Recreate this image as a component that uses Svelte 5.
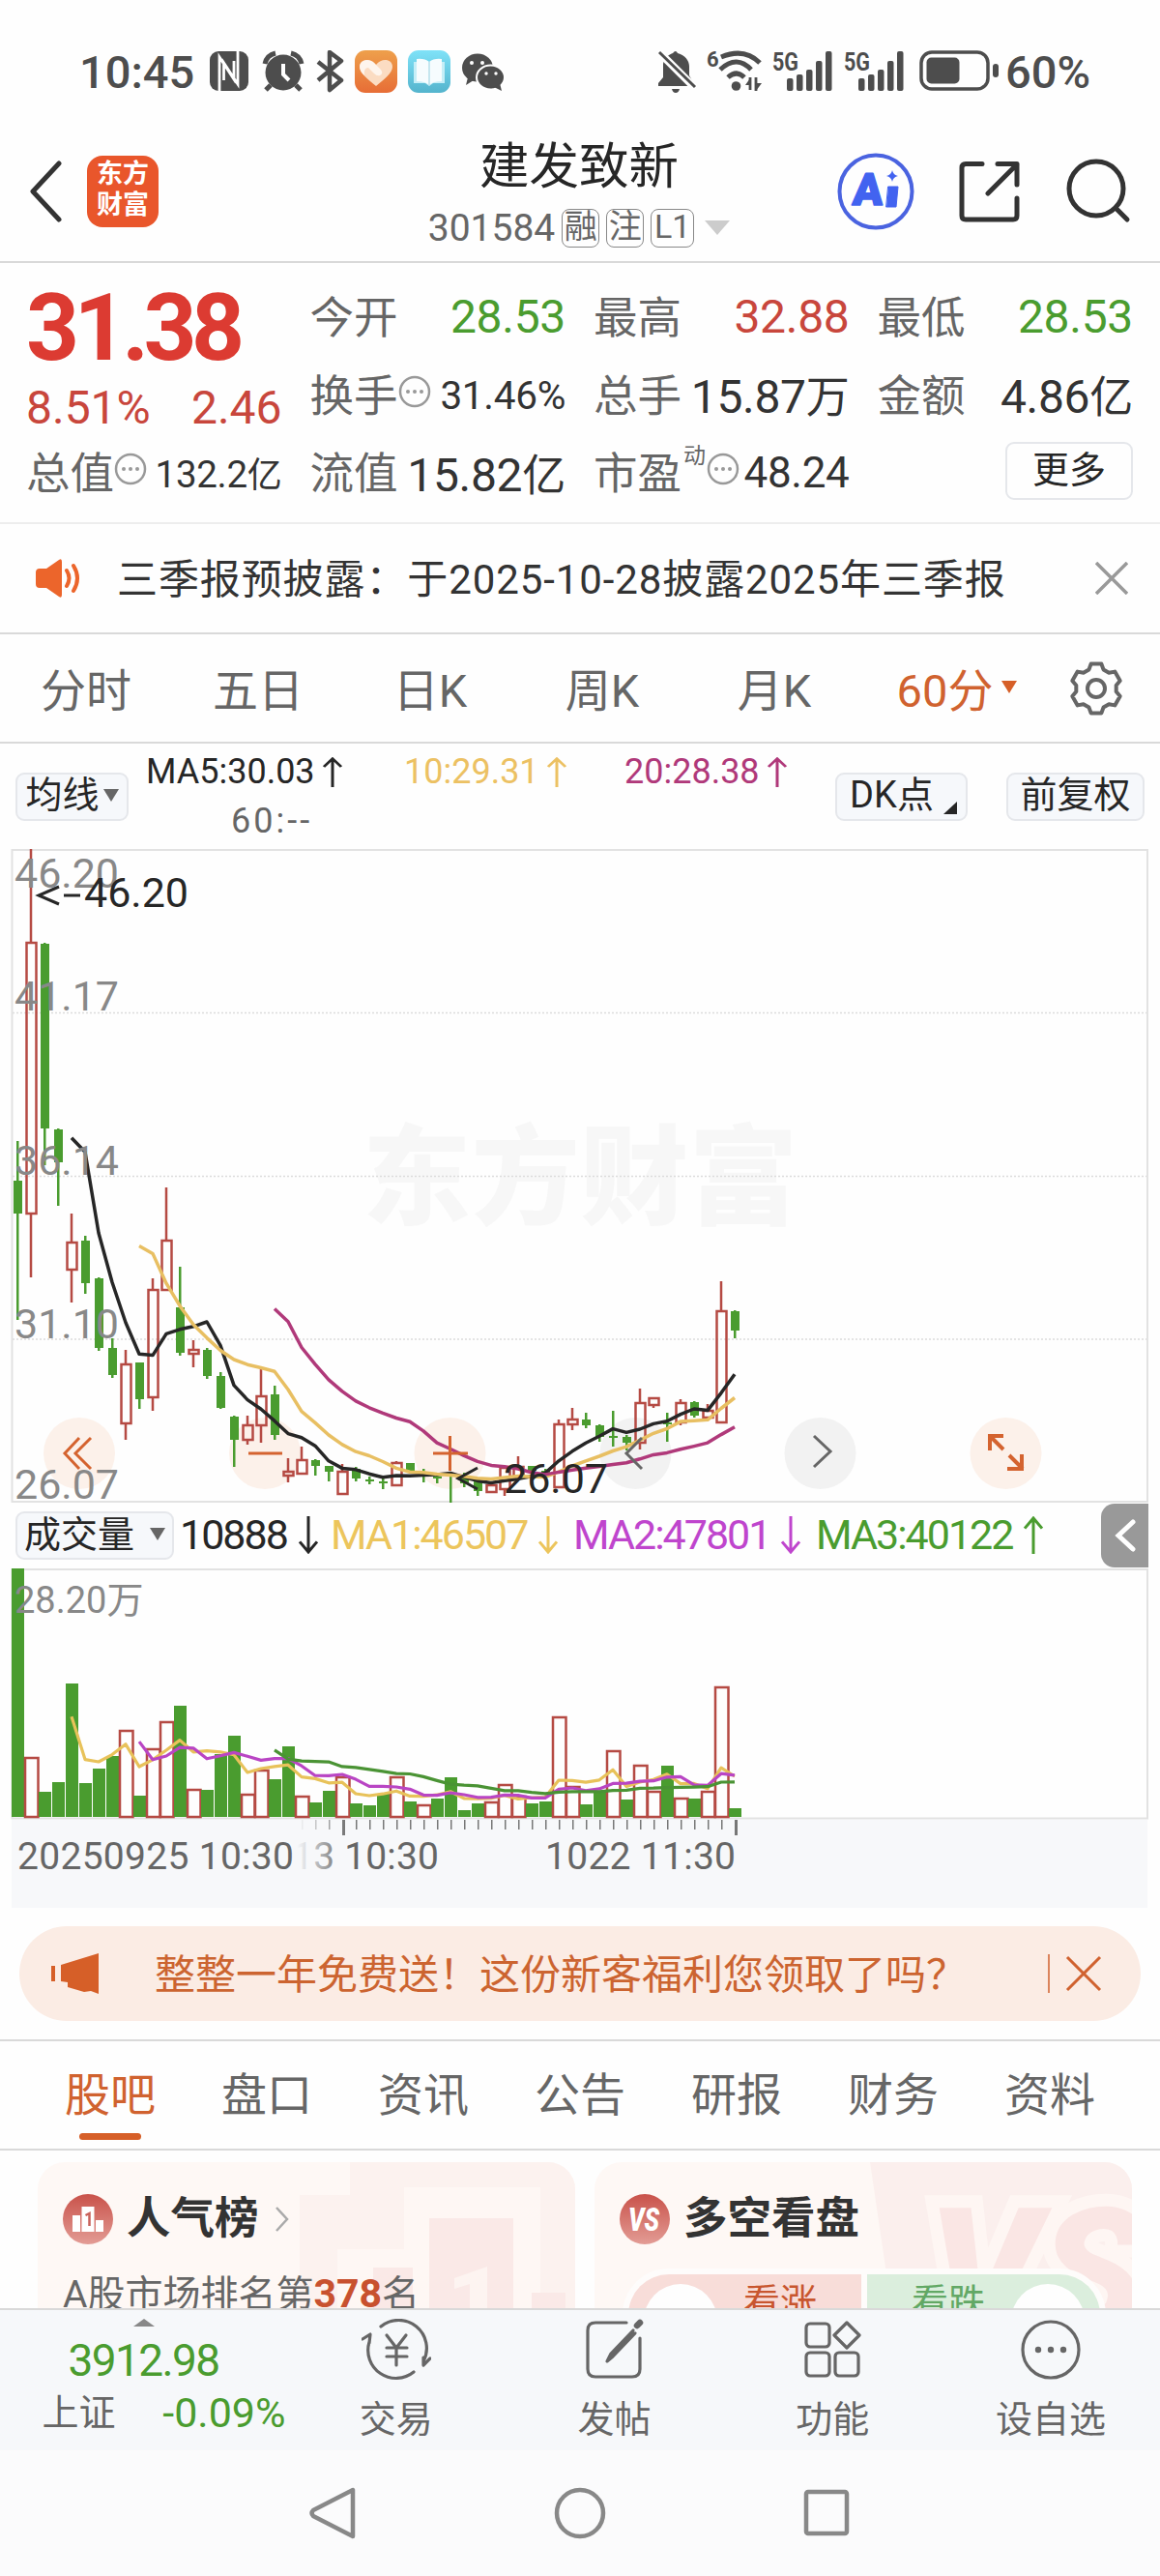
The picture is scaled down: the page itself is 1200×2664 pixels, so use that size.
<script lang="ts">
  type Candle = [up: number, high: number, top: number, bottom: number, low: number];

  const quotes = [
    { label: "今开", value: "28.53", unit: "", tone: "down" },
    { label: "最高", value: "32.88", unit: "", tone: "rise" },
    { label: "最低", value: "28.53", unit: "", tone: "down" },
    { label: "换手", value: "31.46%", unit: "", info: true, small: true },
    { label: "总手", value: "15.87", unit: "万" },
    { label: "金额", value: "4.86", unit: "亿" },
    { label: "总值", value: "132.2", unit: "亿", info: true, tiny: true },
    { label: "流值", value: "15.82", unit: "亿" },
    { label: "市盈", value: "48.24", unit: "", sup: "动", info: true, mid: true },
  ];

  const periods = ["分时", "五日", "日K", "周K", "月K"];
  const sections = ["股吧", "盘口", "资讯", "公告", "研报", "财务", "资料"];

  const priceLabels = [
    { text: "46.20", y: 40 },
    { text: "41.17", y: 167 },
    { text: "36.14", y: 337 },
    { text: "31.10", y: 506 },
    { text: "26.07", y: 672 },
  ];

  // up flag, high, body top, body bottom, low: measured from the top of the chart
  const candles: Candle[] = [
    [0, 302, 343, 377, 487], [1, 0, 97, 377, 443], [0, 97, 98, 289, 327], [0, 289, 290, 324, 369],
    [1, 377, 407, 435, 469], [0, 400, 405, 449, 460], [0, 443, 444, 516, 519], [0, 506, 516, 544, 547],
    [1, 518, 533, 594, 611], [0, 531, 531, 569, 579], [1, 444, 456, 567, 581], [1, 350, 405, 456, 456],
    [0, 432, 474, 521, 524], [1, 508, 518, 522, 536], [0, 516, 518, 545, 548], [0, 541, 545, 578, 579],
    [0, 586, 587, 611, 639], [1, 586, 596, 611, 616], [1, 538, 566, 596, 614], [0, 555, 564, 606, 611],
    [1, 630, 644, 648, 655], [1, 618, 632, 646, 646], [0, 631, 632, 638, 648], [0, 638, 638, 644, 654],
    [1, 636, 644, 667, 667], [0, 639, 641, 651, 654], [0, 649, 652, 654, 657], [0, 650, 654, 656, 662],
    [1, 633, 635, 658, 659], [0, 635, 635, 645, 645], [0, 641, 646, 648, 655], [0, 645, 649, 651, 656],
    [0, 645, 646, 648, 676], [0, 645, 650, 656, 660], [0, 652, 654, 664, 669], [1, 658, 658, 665, 666],
    [1, 639, 640, 662, 669], [1, 628, 639, 650, 652], [0, 638, 638, 643, 643], [0, 641, 643, 647, 652],
    [1, 590, 595, 660, 661], [1, 578, 590, 595, 601], [0, 583, 590, 596, 599], [0, 595, 596, 608, 613],
    [0, 581, 607, 609, 618], [0, 606, 608, 614, 622], [1, 558, 573, 614, 621], [1, 567, 568, 575, 578],
    [0, 583, 593, 595, 613], [1, 569, 573, 593, 596], [0, 571, 572, 586, 588], [1, 574, 581, 588, 588],
    [1, 447, 478, 593, 593], [0, 477, 478, 498, 506],
  ];

  const volumes = [
    257, 62, 26, 36, 138, 35, 50, 63, 90, 22, 71, 99, 115, 29, 28, 65, 84, 24,
    49, 39, 73, 22, 15, 27, 42, 14, 12, 24, 42, 16, 13, 19, 41, 7, 14, 16,
    34, 22, 14, 16, 104, 32, 13, 26, 69, 18, 54, 27, 53, 20, 19, 27, 135, 9,
  ];

  const risingVolumes = new Set([
    1, 8, 10, 11, 13, 17, 18, 21, 24, 28, 30, 35, 36, 37, 40, 41, 44, 46, 47, 49, 51, 52,
  ]);

  const STEP = 14;
  const X0 = 18;
  const VOL_BASE = 257;

  const xAt = (i: number) => X0 + i * STEP;
  const closes = candles.map(([up, , top, bottom]) => (up ? top : bottom));

  function movingAverage(values: number[], n: number, toY = (v: number) => v) {
    const points: string[] = [];
    for (let i = n - 1; i < values.length; i++) {
      const sum = values.slice(i - n + 1, i + 1).reduce((a, b) => a + b, 0);
      points.push(`${xAt(i)},${toY(sum / n).toFixed(1)}`);
    }
    return points.join(" ");
  }

  const volY = (v: number) => VOL_BASE - v;
  const ticks = Array.from({ length: 33 }, (_, k) => 21 + k);

  function gearPath(c: number) {
    const pts: string[] = [];
    for (let k = 0; k < 6; k++) {
      for (const [r, deg] of [[21, -21], [26, -12], [26, 12], [21, 21]]) {
        const a = ((k * 60 - 90 + deg) * Math.PI) / 180;
        pts.push(`${(c + r * Math.cos(a)).toFixed(1)} ${(c + r * Math.sin(a)).toFixed(1)}`);
      }
    }
    return `M${pts.join("L")}Z`;
  }
</script>

{#snippet arrow(up: boolean, h: number)}
  <svg class="arrow" width="22" height={h} viewBox="0 0 22 40" preserveAspectRatio="none">
    <path d={up ? "M11 40V3M2 13 11 2l9 11" : "M11 0v37M2 27l9 11 9-11"} />
  </svg>
{/snippet}

{#snippet signal()}
  <svg width="66" height="44" viewBox="0 0 66 44">
    <text x="1" y="21" font-size="26" font-weight="700" textLength="27" lengthAdjust="spacingAndGlyphs">5G</text>
    <rect x="16" y="29" width="6.5" height="13" rx="2" />
    <rect x="26" y="25" width="6.5" height="17" rx="2" />
    <rect x="36" y="20" width="6.5" height="22" rx="2" />
    <rect x="46" y="11" width="6.5" height="31" rx="2" />
    <rect x="56" y="1" width="6.5" height="41" rx="2" />
  </svg>
{/snippet}

<div class="screen" lang="zh-CN">
  <div class="status">
    <span>10:45</span>
    <svg width="44" height="44" viewBox="0 0 44 44">
      <rect x="2" y="1" width="40" height="41" rx="9" />
      <path d="M12 43V7l15 23V11M31 0v35L16.500 13v18" fill="none" stroke="#fff" stroke-width="2.800" />
    </svg>
    <svg width="44" height="44" viewBox="0 0 44 44">
      <circle cx="22" cy="23" r="18.500" />
      <path d="M3 14Q5 5 14 3M41 14Q39 5 30 3" fill="none" stroke="#4d4d4d" stroke-width="5" />
      <path d="M9 36l-5 5M35 36l5 5" stroke="#4d4d4d" stroke-width="5" />
      <path d="M22 14v11l6 6" fill="none" stroke="#fff" stroke-width="4" />
    </svg>
    <svg width="32" height="44" viewBox="0 0 32 44">
      <path d="M2 12 26 31 14 41V2l12 9L2 31" fill="none" stroke="#4d4d4d" stroke-width="4.500" stroke-linejoin="round" />
    </svg>
    <svg width="44" height="44" viewBox="0 0 44 44">
      <defs>
        <linearGradient id="heartBg" x2="0" y2="1"><stop stop-color="#eea04c" /><stop offset="1" stop-color="#e76d36" /></linearGradient>
        <linearGradient id="bookBg" x2="0" y2="1"><stop stop-color="#7fe2f8" /><stop offset="1" stop-color="#54b4cd" /></linearGradient>
      </defs>
      <rect width="44" height="44" rx="11" fill="url(#heartBg)" />
      <path d="M22 37C14 30 5 24 5 17c0-8 11-10 17-2 6-8 17-6 17 2 0 7-9 13-17 20z" fill="#fbdcc2" />
      <path d="M5 17c0-6 9-10 15-4l7 7q3 4-1 6-3 1-6-2l-6-6q-5 0-4 8-5-4-5-9z" fill="#fff" opacity=".7" />
    </svg>
    <svg width="44" height="44" viewBox="0 0 44 44">
      <rect width="44" height="44" rx="11" fill="url(#bookBg)" />
      <path d="M6 12h32v22H26l-4 3-4-3H6z" fill="#c5eef7" />
      <path d="M9 9q8-1 13 3 5-4 13-3v23q-9 0-13 4-4-4-13-4z" fill="#f6fcfe" />
      <path d="M22 12v24" stroke="#b5dfea" stroke-width="1.500" />
    </svg>
    <svg width="46" height="44" viewBox="0 0 46 44">
      <ellipse cx="17" cy="18" rx="16" ry="14.500" />
      <path d="M7 28l-2 8 8-5z" />
      <ellipse cx="30.500" cy="28" rx="14.500" ry="12.500" stroke="#fff" stroke-width="2" />
      <path d="M34 38l8 4-2-8z" />
      <g fill="#fff"><circle cx="11" cy="13" r="2" /><circle cx="22" cy="13" r="2" /><circle cx="26" cy="24" r="1.700" /><circle cx="36" cy="24" r="1.700" /></g>
    </svg>
    <svg width="42" height="44" viewBox="0 0 42 44">
      <path d="M0 37v-3l5-6V14C6 8 10 5 15 3q3-4 5 0c8 2 12 8 12 14v9L38 37zM14 40h8q-1 4-4 4t-4-4z" />
      <path d="M0 1 38 39" stroke="#fff" stroke-width="8" />
      <path d="M1 2 38 38" stroke="#4d4d4d" stroke-width="3" />
    </svg>
    <svg width="60" height="44" viewBox="0 0 60 44">
      <text x="0" y="17" font-size="22" font-weight="700">6</text>
      <g fill="none" stroke="#4d4d4d" stroke-width="5">
        <path d="M15 7Q39-3 55 13M14 20Q31 4 46 20M22 28Q31 20 39 28" />
        <path d="M45 41V28M51 28v14" stroke-width="2.800" />
      </g>
      <circle cx="30.500" cy="37" r="4.800" />
      <path d="M40 36l5-7v7zM51 42l6-8h-6z" />
    </svg>
    {@render signal()}
    {@render signal()}
    <svg width="84" height="44" viewBox="0 0 84 44">
      <rect x="2" y="2" width="69" height="38" rx="11" fill="none" stroke="#4d4d4d" stroke-width="3.500" />
      <rect x="7.500" y="7.500" width="34" height="27" rx="5" />
      <rect x="76" y="14" width="6" height="14" rx="3" />
    </svg>
    <span>60%</span>
  </div>

  <header>
    <svg class="back" width="40" height="64" viewBox="0 0 40 64"><path d="M34 3 7 32l27 29" /></svg>
    <div class="logo">东方<br />财富</div>
    <div class="title">
      <h1>建发致新</h1>
      <div class="code">
        301584
        <span class="badge">融</span><span class="badge">注</span><span class="badge l1">L1</span>
        <i class="caret"></i>
      </div>
    </div>
    <svg class="ai" width="80" height="80" viewBox="0 0 80 80">
      <circle cx="40" cy="40" r="37.500" fill="none" stroke="#4a63e0" stroke-width="4" />
      <text x="15" y="54" font-size="46" font-weight="900" stroke="#4263f0" stroke-width="1.500" transform="skewX(-4) translate(4 0)">A</text>
      <path d="M53 35h10l-2 21h-10z" stroke="#4263f0" stroke-width="1" stroke-linejoin="round" />
      <path d="M57 18q1 5 6 6-5 1-6 6-1-5-6-6 5-1 6-6z" />
    </svg>
    <svg class="share" width="64" height="64" viewBox="0 0 64 64">
      <path d="M24 3.500H7q-4 0-4 4V57q0 4 4 4h49q4 0 4-4V39M40 3.500h20V25M60 4 30 34" />
    </svg>
    <svg class="search" width="70" height="70" viewBox="0 0 70 70">
      <circle cx="33" cy="32" r="28" /><path d="m53 52 12 12" />
    </svg>
  </header>

  <section class="quote">
    <div class="price">
      <strong>31.38</strong>
      <div><span>8.51%</span><span>2.46</span></div>
    </div>
    {#each quotes as q}
      <div class="cell">
        <span class="label">{q.label}</span>
        {#if q.sup}<sup>{q.sup}</sup>{/if}
        {#if q.info}
          <svg class="info" class:tight={q.sup} width="34" height="34" viewBox="0 0 34 34">
            <circle cx="17" cy="17" r="15" fill="none" stroke="#999" stroke-width="2.500" />
            <circle cx="10" cy="17" r="2" /><circle cx="17" cy="17" r="2" /><circle cx="24" cy="17" r="2" />
          </svg>
        {/if}
        <span class="value {q.tone ?? ''}" class:small={q.small} class:tiny={q.tiny} class:mid={q.mid}>{q.value}<em>{q.unit}</em></span>
      </div>
    {/each}
    <button class="more">更多</button>
  </section>

  <section class="notice">
    <svg width="50" height="42" viewBox="0 0 50 42">
      <path d="M1 15q0-4 4-4h7L25 2q3-2 3 2v34q0 4-3 2L12 31H5q-4 0-4-4z" fill="#ec652b" />
      <path d="M33 13q5 8 0 16M40 8q8 13 0 26" fill="none" stroke="#ec652b" stroke-width="4" stroke-linecap="round" />
    </svg>
    <p>三季报预披露：于2025-10-28披露2025年三季报</p>
    <svg width="34" height="34" viewBox="0 0 34 34"><path d="M1 1l32 32M33 1 1 33" stroke="#999" stroke-width="3.500" /></svg>
  </section>

  <nav class="periods">
    {#each periods as p}<span>{p}</span>{/each}
    <span class="active">60分<i></i></span>
    <svg width="56" height="56" viewBox="0 0 56 56" fill="none" stroke="#666" stroke-width="4" stroke-linejoin="round">
      <path d={gearPath(28)} /><circle cx="28" cy="28" r="9" />
    </svg>
  </nav>

  <div class="tools">
    <button class="ma">均线<i></i></button>
    <div class="legend">
      <span>MA5:30.03{@render arrow(true, 31)}</span>
      <span class="ma10">10:29.31{@render arrow(true, 31)}</span>
      <span class="ma20">20:28.38{@render arrow(true, 31)}</span>
      <span class="ma60">60:--</span>
    </div>
    <button class="dk">DK点<i></i></button>
    <button class="fq">前复权</button>
  </div>

  <svg class="chart" width="1200" height="676" viewBox="0 0 1200 676">
    <text class="watermark" x="375" y="380" textLength="450">东方财富</text>
    <g stroke="#dcdcdc" stroke-width="1.500" stroke-dasharray="2 2">
      <path d="M13 169.500H1187M13 338.500H1187M13 507H1187" />
    </g>
    <rect x="12.500" y="1" width="1174.500" height="674" fill="none" stroke="#e2e2e2" stroke-width="2" />
    {#each [82, 274, 465.5, 657.5, 848.5, 1040.5] as cx, i}
      <circle {cx} cy="625" r="37" fill={i === 3 || i === 4 ? "#f2f2f2" : "#fcf1ea"} />
    {/each}
    {#each candles as [up, high, top, bottom, low], i}
      {#if up}
        <g stroke="#b54a43" stroke-width="2.500" fill="none">
          <path d="M{xAt(i)} {high}V{top}M{xAt(i)} {bottom}V{low}" />
          <rect x={xAt(i) - 4.5} y={top} width="10" height={bottom - top} />
        </g>
      {:else}
        <g fill="#4a9c2f">
          <rect x={xAt(i) - 1} y={high} width="2.5" height={low - high} />
          <rect x={xAt(i) - 4} y={top} width="9" height={bottom - top} />
        </g>
      {/if}
    {/each}
    <g fill="none" stroke-width="3.500" stroke-linejoin="round">
      <polyline points={movingAverage(closes, 5)} stroke="#262626" />
      <polyline points={movingAverage(closes, 10)} stroke="#e8bf62" />
      <polyline points={movingAverage(closes, 20)} stroke="#b0397a" />
    </g>
    <g class="axis">
      {#each priceLabels as l}<text x="15" y={l.y}>{l.text}</text>{/each}
    </g>
    <g class="mark">
      <path d="M61 39 40 48l21 9M66 48h17M494 640l-20 11 20 11" />
      <text x="87" y="60">46.20</text>
      <text x="521" y="666">26.07</text>
    </g>
    <g fill="none" stroke="#d4632f" stroke-width="3">
      <path d="M82 609 67 625l15 16M94 609 78 625l16 16M257 625h35M448 625h36M465.500 607v36" />
      <path d="M1038 607h-14v15M1024 607l14 14M1044 627l14 14M1042 641h15v-15" stroke-width="4" />
      <path d="M664 609 648 625l16 16M842 607l17 16-17 16" stroke="#666" />
    </g>
  </svg>

  <div class="volHead">
    <button>成交量<i></i></button>
    <span>10888{@render arrow(false, 39)}</span>
    <span class="v1">MA1:46507{@render arrow(false, 39)}</span>
    <span class="v2">MA2:47801{@render arrow(false, 39)}</span>
    <span class="v3">MA3:40122{@render arrow(true, 39)}</span>
    <div class="fold">
      <svg width="22" height="34" viewBox="0 0 22 34"><path d="M19 3 4 17l15 14" /></svg>
    </div>
  </div>

  <svg class="chart" width="1200" height="351" viewBox="0 0 1200 351">
    <defs>
      <linearGradient id="fade"><stop offset=".1" stop-color="#f7f8fa" /><stop offset="1" stop-color="#f7f8fa" stop-opacity="0" /></linearGradient>
    </defs>
    <rect x="12.500" y="1" width="1174.500" height="257.500" fill="none" stroke="#e2e2e2" stroke-width="2" />
    <rect x="12" y="260" width="1175" height="91" fill="#f7f8fa" />
    {#each volumes as v, i}
      {#if risingVolumes.has(i)}
        <rect x={xAt(i) - 6} y={volY(v) + 1} width="13.5" height={v - 1} fill="#fefefe" stroke="#b54a43" stroke-width="2.500" />
      {:else}
        <rect x={xAt(i) - 6} y={volY(v)} width="13" height={v} fill="#4a9c2f" />
      {/if}
    {/each}
    <g fill="none" stroke-width="3.200" stroke-linejoin="round">
      <polyline points={movingAverage(volumes, 5, volY)} stroke="#e8c25a" />
      <polyline points={movingAverage(volumes, 10, volY)} stroke="#b945c4" />
      <polyline points={movingAverage(volumes, 20, volY)} stroke="#4a9334" />
    </g>
    <text x="15" y="46" class="peak">28.20万</text>
    {#each ticks as t}
      {@const major = t === 24 || t === 53}
      <rect x={xAt(t)} y="260" width={major ? 3 : 1.5} height={major ? 16 : 10} fill="#777" />
    {/each}
    <g class="dates">
      <text x="258" y="311" textLength="196">1013 10:30</text>
      <rect x="12" y="260" width="290" height="91" fill="#f7f8fa" />
      <rect x="302" y="260" width="55" height="91" fill="url(#fade)" />
      <text x="18" y="311" textLength="286">20250925 10:30</text>
      <text x="564" y="311" textLength="197">1022 11:30</text>
    </g>
  </svg>

  <div class="promo">
    <svg width="50" height="44" viewBox="0 0 50 44">
      <path d="M0 14h4v16H0zM10 13 49 1v42l-8-3-7 1-17-5v-5l-7-1z" fill="#d65f28" />
    </svg>
    <p>整整一年免费送！这份新客福利您领取了吗？</p>
    <svg class="close" width="56" height="40" viewBox="0 0 56 40">
      <path d="M1 0v40" stroke-width="1.500" /><path d="m20 3 34 34M54 3 20 37" stroke-width="3" />
    </svg>
  </div>

  <nav class="sections">
    {#each sections as s, i}<span class:active={i === 0}>{s}</span>{/each}
  </nav>

  <section class="cards">
    <article>
      <svg class="deco" width="556" height="170" viewBox="0 0 556 170">
        <path d="M271 34h52V0h233v170H271z" fill="#fbefed" opacity=".7" />
        <path d="M310 90h69V26h141v144H310z" fill="#fef7f4" />
        <path d="M405 58h87v112h-87zM347 109h41v61h-41zM511 135h35v35h-35z" fill="#fae9e7" />
        <path d="m431 120 34-12v62h-18v-44l-16 5z" fill="#fdf4f1" />
      </svg>
      <div class="head">
        <svg width="52" height="52" viewBox="0 0 52 52">
          <defs><linearGradient id="badge" x2="0" y2="1"><stop stop-color="#c9524a" /><stop offset="1" stop-color="#e39c95" /></linearGradient></defs>
          <circle cx="26" cy="26" r="26" fill="url(#badge)" />
          <path d="M10 22h8v17h-8zM19.500 13h13v26h-13zM34 27h8v12h-8z" fill="#fff" />
          <path d="m23.500 22 4-2v13" fill="none" stroke="#c9625b" stroke-width="2.500" />
        </svg>
        <h2>人气榜</h2>
        <svg width="16" height="28" viewBox="0 0 16 28"><path d="m2 2 11 12L2 26" fill="none" stroke="#aaa" stroke-width="2.500" /></svg>
      </div>
      <p>A股市场排名第<b>378</b>名</p>
    </article>
    <article>
      <svg class="deco" width="556" height="170" viewBox="0 0 556 170">
        <path d="M285 0h271v170H310z" fill="#fbefed" />
        <text x="345" y="175" font-size="180" font-weight="900" font-style="italic" textLength="225" lengthAdjust="spacingAndGlyphs">VS</text>
      </svg>
      <div class="head">
        <svg width="52" height="52" viewBox="0 0 52 52">
          <circle cx="26" cy="26" r="26" fill="url(#badge)" />
          <text x="9" y="38" font-size="34" font-weight="900" font-style="italic" fill="#fff" textLength="32" lengthAdjust="spacingAndGlyphs">VS</text>
        </svg>
        <h2>多空看盘</h2>
      </div>
      <div class="vote">
        <div class="bull"><i></i>看涨</div>
        <div class="bear">看跌<i></i></div>
      </div>
    </article>
  </section>

  <footer>
    <div class="index">
      <i></i>
      <b>3912.98</b>
      <div><span>上证</span><em>-0.09%</em></div>
    </div>
    <div class="item">
      <svg width="72" height="64" viewBox="0 0 72 64">
        <path d="M20 8a29 29 0 0 1 44 36M54 55A29 29 0 0 1 8 24M1 21l8-5-1 9M71 41l-7 7v-8" />
        <path d="m26 17 10 13 10-13M26 30h21M26 39h21M36 30v18" />
      </svg>
      交易
    </div>
    <div class="item">
      <svg width="64" height="64" viewBox="0 0 64 64">
        <path d="M44 4H12q-8 0-8 8v40q0 8 8 8h38q8 0 8-8V20" />
        <path d="m55 7 3-3" stroke-width="6.500" /><path d="M51 12 28 36l-4 8 6-5 23-24" fill="#666" />
      </svg>
      发帖
    </div>
    <div class="item">
      <svg width="60" height="64" viewBox="0 0 60 64">
        <rect x="3" y="5" width="24" height="24" rx="4" /><rect x="3" y="35" width="24" height="24" rx="4" />
        <rect x="33" y="35" width="24" height="24" rx="4" /><path d="m45 4 13 13-13 13-13-13z" />
      </svg>
      功能
    </div>
    <div class="item">
      <svg width="64" height="64" viewBox="0 0 64 64">
        <circle cx="32" cy="32" r="29" />
        <g fill="#666" stroke="none"><circle cx="19" cy="32" r="3.200" /><circle cx="32" cy="32" r="3.200" /><circle cx="45" cy="32" r="3.200" /></g>
      </svg>
      设自选
    </div>
  </footer>

  <div class="sysnav">
    <svg width="50" height="56" viewBox="0 0 50 56"><path d="M45 4v48L4 31q-3-3 0-6z" /></svg>
    <svg width="56" height="56" viewBox="0 0 56 56"><circle cx="28" cy="28" r="24" /></svg>
    <svg width="50" height="56" viewBox="0 0 50 56"><rect x="4" y="6" width="42" height="43" rx="2" /></svg>
  </div>
</div>

<style>
  :global(body) {
    background: #fefefe;
  }

  .screen {
    width: 1200px;
    height: 2664px;
    overflow: hidden;
    font-family: Roboto, "Noto Sans CJK SC", sans-serif;
    color: #333;
    background: #fefefe;
  }

  .screen * {
    box-sizing: border-box;
  }

  svg {
    display: block;
    flex: none;
  }

  h1,
  h2,
  p {
    margin: 0;
  }

  i,
  em {
    font-style: normal;
  }

  button {
    display: flex;
    align-items: center;
    justify-content: center;
    padding: 0 0 3px;
    font: inherit;
    font-size: 38px;
    line-height: 1;
    color: #262626;
    background: #f6f8fb;
    border: 2px solid #e5e7eb;
    border-radius: 9px;
  }

  .status {
    display: grid;
    grid-template-columns: 133px 56px 56px 40px 55px 55px 204px 50px 67px 74px 79px 89px auto;
    align-items: center;
    height: 148px;
    padding-left: 82px;
    font-size: 47px;
    font-weight: 500;
    color: #4d4d4d;
    fill: #4d4d4d;
  }

  header {
    display: flex;
    align-items: center;
    height: 124px;
    padding: 0 29px 22px 27px;
    border-bottom: 2px solid #d9d9d9;
  }

  header svg {
    fill: none;
    stroke: #333;
    stroke-width: 5;
    stroke-linecap: round;
    stroke-linejoin: round;
  }

  header .ai {
    margin-right: 46px;
    fill: #4263f0;
    stroke: none;
  }

  .back {
    margin-right: 23px;
  }

  .search {
    margin-left: 45px;
  }

  .logo {
    width: 74px;
    height: 74px;
    padding-top: 3px;
    border-radius: 16px;
    background: #e9562b;
    color: #fff;
    font-size: 27px;
    font-weight: 700;
    line-height: 32px;
    text-align: center;
  }

  .title {
    flex: 1;
    padding: 12px 0 0 168px;
    text-align: center;
  }

  h1 {
    height: 63px;
    font-size: 51.500px;
    font-weight: 400;
    line-height: 63px;
    color: #262626;
  }

  .code {
    display: flex;
    align-items: center;
    justify-content: center;
    height: 63px;
    font-size: 39px;
    color: #666;
  }

  .badge {
    width: 39px;
    height: 40px;
    margin-left: 7px;
    border: 1.5px solid #888;
    border-radius: 8px;
    font-size: 34px;
    line-height: 35px;
    text-align: center;
  }

  .l1 {
    width: 45px;
  }

  .caret {
    margin-left: 11px;
    border: 13px solid transparent;
    border-top: 15px solid #ccc;
    border-bottom: 0;
  }

  .quote {
    display: grid;
    grid-template-columns: repeat(4, 264.500px);
    grid-auto-rows: 80.500px;
    column-gap: 29px;
    height: 270px;
    padding: 15px 27px 0;
    border-bottom: 2px solid #ededed;
  }

  .price {
    grid-row: span 2;
    color: #c8463c;
    font-size: 48px;
  }

  .price strong {
    display: block;
    height: 102px;
    font-size: 96px;
    line-height: 104px;
    letter-spacing: -5.500px;
    color: #dc3b32;
  }

  .price div {
    display: flex;
    justify-content: space-between;
    line-height: 65px;
  }

  .cell {
    display: flex;
    align-items: center;
  }

  .label {
    margin-top: -4px;
    font-size: 45.500px;
    color: #666;
  }

  sup {
    margin: -34px 0 0 2px;
    font-size: 23px;
    line-height: 1;
    color: #666;
  }

  .info {
    margin: -6px 0 0;
    fill: #999;
  }

  .tight {
    margin-left: 1px;
  }

  .value {
    flex: 1;
    font-size: 48px;
    letter-spacing: -0.300px;
    text-align: right;
    white-space: nowrap;
    color: #333;
  }

  .value em {
    font-size: 45px;
  }

  .value.small {
    font-size: 40.500px;
  }

  .value.tiny {
    font-size: 38.500px;
  }

  .value.tiny em {
    font-size: 36px;
  }

  .value.mid {
    font-size: 44px;
  }

  .value.rise {
    color: #c8463c;
  }

  .value.down {
    color: #4a9c2f;
  }

  .more {
    width: 132px;
    height: 60px;
    margin: 9px 0 0 auto;
    background: #fefefe;
  }

  .notice {
    display: flex;
    align-items: center;
    height: 114px;
    padding: 0 33px 0 36px;
    border-bottom: 2px solid #d9d9d9;
  }

  .notice p {
    flex: 1;
    padding: 0 0 6px 35px;
    font-size: 42px;
    letter-spacing: 0.900px;
    white-space: nowrap;
  }

  .periods {
    display: grid;
    grid-template-columns: repeat(6, 178px) 132px;
    align-items: center;
    justify-items: center;
    height: 113px;
    border-bottom: 2px solid #d9d9d9;
    font-size: 47px;
    color: #666;
  }

  .periods span {
    padding-bottom: 3px;
  }

  .periods .active {
    display: flex;
    align-items: center;
    padding-left: 22px;
    white-space: nowrap;
    color: #d0622f;
  }

  .periods i {
    margin-left: 9px;
    border: 8px solid transparent;
    border-top: 13px solid #d65f28;
    border-bottom: 0;
  }

  .tools {
    display: flex;
    align-items: center;
    height: 109px;
    padding: 0 16px;
  }

  .tools button {
    height: 50px;
  }

  .ma {
    width: 117px;
  }

  .ma i,
  .volHead button i {
    margin-left: 4px;
    border: 8px solid transparent;
    border-top: 13px solid #666;
    border-bottom: 0;
  }

  .legend {
    display: grid;
    grid-template-columns: 267px 228px 216px;
    grid-auto-rows: 51px;
    align-items: center;
    padding-left: 18px;
    font-size: 36px;
    color: #262626;
  }

  .legend span,
  .volHead span {
    display: flex;
    align-items: center;
    white-space: nowrap;
  }

  .arrow {
    margin-left: 7px;
    fill: none;
    stroke: currentColor;
    stroke-width: 3;
  }

  .legend .ma10 {
    color: #ecc163;
  }

  .legend .ma20 {
    color: #b0397a;
  }

  .legend .ma60 {
    padding-left: 88px;
    letter-spacing: 3px;
    color: #666;
  }

  .dk {
    width: 137px;
    margin: 0 40px 0 auto;
  }

  .dk i {
    align-self: flex-end;
    margin: 0 -4px 2px 10px;
    border-top: 13px solid transparent;
    border-right: 14px solid #262626;
  }

  .fq {
    width: 143px;
  }

  .watermark {
    font-size: 112px;
    font-weight: 900;
    fill: #f7f7f7;
  }

  .axis,
  .mark {
    font-size: 43px;
  }

  .axis {
    fill: #888;
  }

  .mark {
    fill: #262626;
  }

  .mark path {
    fill: none;
    stroke: #262626;
    stroke-width: 3;
  }

  .volHead {
    display: grid;
    grid-template-columns: 170px 156px 251px 251px 295px 49px;
    align-items: center;
    height: 68px;
    padding-left: 16px;
    font-size: 43px;
    letter-spacing: -2px;
    color: #262626;
  }

  .volHead span {
    margin-top: -2px;
  }

  .volHead button {
    width: 164px;
    height: 50px;
    letter-spacing: 0;
  }

  .volHead button i {
    margin-left: 16px;
  }

  .volHead .arrow {
    margin-left: 11px;
  }

  .volHead .v1 {
    color: #ecc55c;
  }

  .volHead .v2 {
    color: #bf45cd;
  }

  .volHead .v3 {
    color: #4a9c2f;
  }

  .fold {
    display: flex;
    align-items: center;
    justify-content: center;
    height: 66px;
    border-radius: 14px 0 0 14px;
    background: #999;
  }

  .fold path {
    fill: none;
    stroke: #fff;
    stroke-width: 5;
    stroke-linecap: round;
  }

  .peak {
    font-size: 38px;
    fill: #888;
  }

  .dates {
    font-size: 39px;
    fill: #666;
  }

  .promo {
    display: flex;
    align-items: center;
    height: 98px;
    margin: 19px 20px;
    padding: 0 40px 0 33px;
    border-radius: 49px;
    background: #fbece4;
  }

  .promo p {
    flex: 1;
    padding: 0 0 5px 57px;
    font-size: 42px;
    white-space: nowrap;
    color: #cc6430;
  }

  .close {
    stroke: #d0622f;
  }

  .sections {
    display: grid;
    grid-template-columns: repeat(7, 162px);
    height: 115px;
    padding-left: 33px;
    border: solid #d9d9d9;
    border-width: 2px 0;
    font-size: 47px;
    line-height: 112px;
    text-align: center;
    color: #666;
  }

  .sections .active {
    color: #d0622f;
  }

  .sections .active::after {
    content: "";
    display: block;
    width: 64px;
    height: 7px;
    margin: -17px auto 0;
    border-radius: 4px;
    background: #d65f28;
  }

  .cards {
    display: flex;
    gap: 20px;
    height: 163px;
    padding: 12px 0 0 39px;
    overflow: hidden;
  }

  article {
    position: relative;
    flex: none;
    width: 556px;
    height: 260px;
    padding: 33px 26px;
    border-radius: 28px;
    overflow: hidden;
    background: #fef8f5;
  }

  .deco {
    position: absolute;
    top: 0;
    left: 0;
    fill: #fae6e4;
  }

  .deco text {
    stroke: #fef6f3;
    stroke-width: 26;
    paint-order: stroke;
  }

  .head {
    position: relative;
    display: flex;
    align-items: center;
    height: 52px;
  }

  h2 {
    margin: 0 16px 0 14px;
    font-size: 45.500px;
    font-weight: 700;
    line-height: 52px;
  }

  article p {
    position: relative;
    margin-top: 25px;
    font-size: 39px;
    line-height: 52px;
    color: #666;
  }

  article b {
    font-size: 41px;
    color: #c8512f;
  }

  .vote {
    position: relative;
    display: flex;
    gap: 6px;
    width: 500px;
    height: 96px;
    margin: 25px 0 0 3px;
    border: 6px solid #fefcfb;
    border-radius: 48px;
    overflow: hidden;
    background: #fefcfb;
    font-size: 38px;
    line-height: 58px;
  }

  .vote div {
    display: flex;
    flex: 1;
    justify-content: space-between;
  }

  .vote i {
    width: 76px;
    height: 76px;
    margin-top: 10px;
    border-radius: 50%;
    background: #fefefe;
  }

  .vote .bull {
    padding: 0 46px 0 16px;
    background: #f8ddd9;
    color: #c8562f;
  }

  .vote .bear {
    padding: 0 16px 0 46px;
    background: #dbeedd;
    color: #62a865;
  }

  footer {
    display: grid;
    grid-template-columns: 297px repeat(4, 225.700px);
    height: 147px;
    border-top: 2px solid #d9d9d9;
    background: #f6f8fa;
    font-size: 38px;
    color: #666;
  }

  .index {
    display: flex;
    flex-direction: column;
    align-items: center;
    padding-top: 9px;
    color: #4a9c2f;
  }

  .index i {
    border: 11px solid transparent;
    border-top: 0;
    border-bottom: 8px solid #888;
  }

  .index b {
    margin-top: 8px;
    font-size: 46px;
    font-weight: 400;
    line-height: 54px;
    letter-spacing: -1.600px;
  }

  .index div {
    display: flex;
    justify-content: space-between;
    width: 252px;
    margin-left: 42px;
    line-height: 54px;
  }

  .index span {
    color: #666;
  }

  .index em {
    font-size: 43px;
  }

  .item {
    display: flex;
    flex-direction: column;
    align-items: center;
    padding-top: 9px;
    line-height: 81px;
  }

  .item svg {
    fill: none;
    stroke: #666;
    stroke-width: 3.200;
    stroke-linejoin: round;
    stroke-linecap: round;
  }

  .sysnav {
    display: flex;
    align-items: center;
    justify-content: center;
    gap: 202px;
    height: 130px;
    background: #fbfbfc;
  }

  .sysnav svg {
    fill: none;
    stroke: #888;
    stroke-width: 4.500;
    stroke-linejoin: round;
  }
</style>
